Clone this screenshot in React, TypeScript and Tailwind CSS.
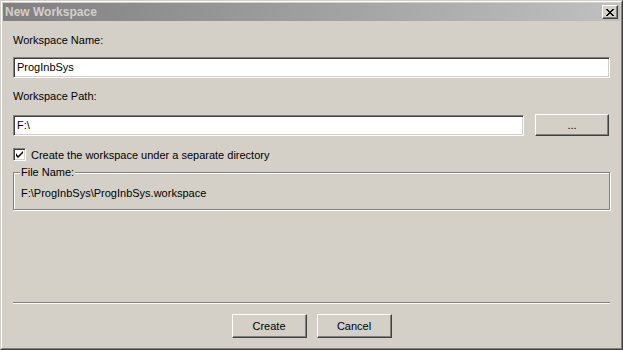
import React from "react";

const font = { fontFamily: '"Liberation Sans", Arial, sans-serif' };

function Raised({ className = "", children }: { className?: string; children?: React.ReactNode }) {
  return (
    <div
      className={`flex items-center justify-center border border-t-white border-l-white border-b-[#404040] border-r-[#404040] bg-[#d4d0c8] shadow-[inset_-1px_-1px_0_#808080] text-[11px] text-black ${className}`}
    >
      {children}
    </div>
  );
}

function Sunken({ className = "", children }: { className?: string; children?: React.ReactNode }) {
  return (
    <div
      className={`flex items-center border border-t-[#808080] border-l-[#808080] border-b-white border-r-white bg-white shadow-[inset_1px_1px_0_#404040,inset_-1px_-1px_0_#d4d0c8] text-[11px] text-black ${className}`}
    >
      {children}
    </div>
  );
}

export default function App() {
  return (
    <div
      style={font}
      className="w-[623px] h-[350px] bg-[#d4d0c8] border border-t-[#d4d0c8] border-l-[#d4d0c8] border-b-[#404040] border-r-[#404040] text-[11px] text-black"
    >
      <div className="w-full h-full border border-t-white border-l-white border-b-[#808080] border-r-[#808080] p-px flex flex-col">
        {/* title bar */}
        <div className="h-[18px] flex items-center justify-between bg-gradient-to-r from-[#808080] to-[#c0c0c0] pl-[2px] pr-[2px]">
          <span className="text-[12px] font-bold text-[#d4d0c8] leading-none">New Workspace</span>
          <Raised className="w-[16px] h-[14px]">
            <svg width="8" height="7" viewBox="0 0 8 7">
              <path d="M0 0h2v1h-2zM6 0h2v1h-2zM1 1h2v1h-2zM5 1h2v1h-2zM2 2h4v1h-4zM3 3h2v1h-2zM2 4h4v1h-4zM1 5h2v1h-2zM5 5h2v1h-2zM0 6h2v1h-2zM6 6h2v1h-2z" fill="#000" />
            </svg>
          </Raised>
        </div>

        {/* content */}
        <div className="flex flex-col flex-1 px-[10px] pt-[12px]">
          <div className="h-[14px] leading-[14px]">Workspace Name:</div>
          <Sunken className="mt-[10px] h-[21px] pl-[3px]">ProgInbSys</Sunken>

          <div className="mt-[11px] h-[14px] leading-[14px]">Workspace Path:</div>
          <div className="mt-[11px] flex items-center gap-[11px] h-[22px]">
            <Sunken className="h-[21px] w-[511px] pl-[3px]">F:\</Sunken>
            <Raised className="h-[22px] w-[74px]">...</Raised>
          </div>

          <div className="mt-[12px] flex items-center h-[13px]">
            <div className="w-[13px] h-[13px] border border-t-[#808080] border-l-[#808080] border-b-white border-r-white bg-white shadow-[inset_1px_1px_0_#404040,inset_-1px_-1px_0_#d4d0c8] flex items-center justify-center">
              <svg width="7" height="7" viewBox="0 0 7 7">
                <path d="M0 2v3l2 2 5-5v-2l-5 5z" fill="#000" />
              </svg>
            </div>
            <span className="ml-[5px] leading-[14px]">Create the workspace under a separate directory</span>
          </div>

          {/* group box */}
          <div className="relative mt-[11px] h-[38px] border border-[#808080] shadow-[1px_1px_0_#fff,inset_1px_1px_0_#fff] flex items-center pl-[7px] pt-[4px]">
            <span className="absolute left-[6px] top-[-8px] bg-[#d4d0c8] px-[1px] leading-[14px]">File Name:</span>
            <span className="leading-[14px]">F:\ProgInbSys\ProgInbSys.workspace</span>
          </div>

          <div className="mt-[92px] h-[2px] border-t border-t-[#808080] border-b border-b-white" />

          <div className="mt-[10px] flex justify-center gap-[10px]">
            <Raised className="w-[75px] h-[24px]">Create</Raised>
            <Raised className="w-[75px] h-[24px]">Cancel</Raised>
          </div>
        </div>
      </div>
    </div>
  );
}
